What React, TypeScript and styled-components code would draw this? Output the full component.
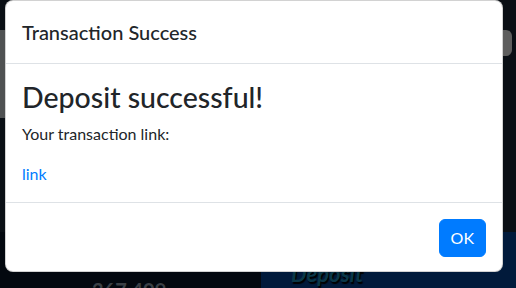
import React from 'react';
import styled, { createGlobalStyle } from 'styled-components';

const theme = {
    text: '#212529',
    border: '#dee2e6',
    primary: '#007bff',
    font: '"Lato", "Open Sans", sans-serif',
};

const GlobalStyle = createGlobalStyle`
    html, body {
        margin: 0;
        padding: 0;
        background: #0a0f15;
    }
    * {
        box-sizing: border-box;
    }
`;

const Page = styled.div`
    position: relative;
    width: 516px;
    height: 288px;
    overflow: hidden;
    background: #141e2a;
    display: grid;
    grid-template-rows: 30px 1fr 56px;
    font-family: ${theme.font};
`;

const MiddleRow = styled.div`
    display: flex;
    align-items: flex-start;
    justify-content: space-between;
`;

const SideRail = styled.div`
    width: 5px;
    height: 88px;
    background: #9ea2a4;
`;

const ScrollPill = styled.div`
    width: 11px;
    height: 26px;
    margin-right: 4px;
    border-radius: 0 6px 6px 0;
    background: #bcbcbc;
`;

const BottomRow = styled.div`
    display: grid;
    grid-template-columns: 261px 1fr;
`;

const Stat = styled.div`
    padding: 46px 0 0 92px;
    font-size: 20px;
    font-weight: 700;
    line-height: 24px;
    color: #76808c;
    background: #06101e;
`;

const DepositPanel = styled.div`
    padding: 29px 0 0 30px;
    background: #023476;
    font-size: 22px;
    font-style: italic;
    font-weight: 700;
    line-height: 26px;
    color: #157090;
    text-shadow: 1px 2px 1px #000;
`;

const Backdrop = styled.div`
    position: absolute;
    inset: 0;
    background: rgba(0, 0, 0, 0.5);
`;

const Modal = styled.div`
    position: absolute;
    top: 0;
    left: 5px;
    width: 498px;
    display: flex;
    flex-direction: column;
    background: #fff;
    border: 1px solid rgba(0, 0, 0, 0.175);
    border-radius: 8px;
    color: ${theme.text};
    font-family: ${theme.font};
`;

const Header = styled.div`
    padding: 16px;
    border-bottom: 1px solid ${theme.border};
`;

const Title = styled.h5`
    margin: 0;
    font-size: 20px;
    font-weight: 500;
    line-height: 30px;
`;

const Body = styled.div`
    padding: 16px;
`;

const Heading = styled.h1`
    margin: 0 0 8px;
    font-size: 28.5px;
    font-weight: 500;
    line-height: 34px;
`;

const Text = styled.p<{ $last?: boolean }>`
    margin: 0 0 ${(p) => (p.$last ? 0 : 16)}px;
    font-size: 16px;
    line-height: 24px;
`;

const Link = styled.a`
    color: ${theme.primary};
    text-decoration: none;
`;

const Footer = styled.div`
    display: flex;
    justify-content: flex-end;
    padding: 12px 12px 10px;
    border-top: 1px solid ${theme.border};
`;

const Button = styled.button`
    margin: 4px;
    padding: 6px 11px;
    border: 1px solid ${theme.primary};
    border-radius: 6px;
    background: ${theme.primary};
    color: #fff;
    font-family: ${theme.font};
    font-size: 16px;
    line-height: 24px;
    cursor: pointer;
`;

export default function App(): JSX.Element {
    return (
        <>
            <GlobalStyle />
            <Page>
                <div />
                <MiddleRow>
                    <SideRail />
                    <ScrollPill />
                </MiddleRow>
                <BottomRow>
                    <Stat>367,409</Stat>
                    <DepositPanel>Deposit</DepositPanel>
                </BottomRow>
                <Backdrop />
                <Modal role="dialog">
                    <Header>
                        <Title>Transaction Success</Title>
                    </Header>
                    <Body>
                        <Heading>Deposit successful!</Heading>
                        <Text>Your transaction link:</Text>
                        <Text $last>
                            <Link href="#">link</Link>
                        </Text>
                    </Body>
                    <Footer>
                        <Button type="button">OK</Button>
                    </Footer>
                </Modal>
            </Page>
        </>
    );
}
